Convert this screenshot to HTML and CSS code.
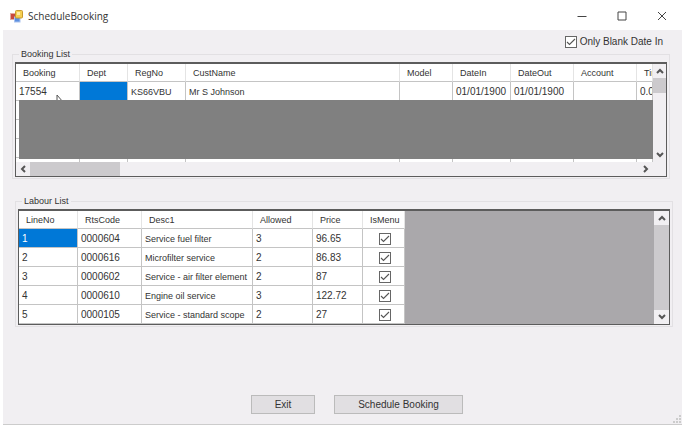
FILE: index.html
```html
<!doctype html>
<html lang="en">
    <head>
        <title>ScheduleBooking</title>
        <meta charset="utf-8">
        <link rel="stylesheet" href="styles.css">
    </head>
    <body>
        <div class="window">
            <header class="titlebar">
                <svg class="app-icon" width="13" height="13" viewBox="0 0 13 13">
                    <rect x="0.5" y="3.5" width="5" height="6" fill="#c8493c" stroke="#e3aaa0"/>
                    <rect x="4.5" y="7" width="5.5" height="5" fill="#5d8fe0" stroke="#a9c2ee"/>
                    <rect x="5.5" y="0.5" width="7" height="7.5" rx="1" fill="#f5cf52" stroke="#c99a2e"/>
                    <rect x="7" y="2" width="3" height="3" fill="#fdeba4"/>
                </svg>
                <h1>ScheduleBooking</h1>
                <button class="caption" aria-label="Minimize">
                    <svg width="10" height="10" viewBox="0 0 10 10"><path d="M0.5 5.5h9"/></svg>
                </button>
                <button class="caption" aria-label="Maximize">
                    <svg width="10" height="10" viewBox="0 0 10 10"><path d="M1 1h8v8h-8z"/></svg>
                </button>
                <button class="caption" aria-label="Close">
                    <svg width="10" height="10" viewBox="0 0 10 10"><path d="M1 1l8 8M9 1l-8 8"/></svg>
                </button>
            </header>

            <main class="form">
                <div class="filter">
                    <input type="checkbox" id="blankDate" checked>
                    <label for="blankDate">Only Blank Date In</label>
                </div>

                <fieldset class="group">
                    <legend>Booking List</legend>
                    <div class="grid booking">
                        <div class="view">
                            <table>
                                <colgroup>
                                    <col class="w-booking"><col class="w-dept"><col class="w-reg"><col>
                                    <col class="w-model"><col class="w-date"><col class="w-account"><col class="w-account"><col class="w-time">
                                </colgroup>
                                <thead>
                                    <tr><th>Booking</th><th>Dept</th><th>RegNo</th><th>CustName</th><th>Model</th><th>DateIn</th><th>DateOut</th><th>Account</th><th>Time</th></tr>
                                </thead>
                                <tbody>
                                    <tr><td class="num">17554</td><td class="selected"></td><td>KS66VBU</td><td>Mr S Johnson</td><td></td><td class="num">01/01/1900</td><td class="num">01/01/1900</td><td></td><td class="num">0.00</td></tr>
                                    <tr><td></td><td></td><td></td><td></td><td></td><td></td><td></td><td></td><td></td></tr>
                                    <tr><td></td><td></td><td></td><td></td><td></td><td></td><td></td><td></td><td></td></tr>
                                    <tr><td></td><td></td><td></td><td></td><td></td><td></td><td></td><td></td><td></td></tr>
                                    <tr><td></td><td></td><td></td><td></td><td></td><td></td><td></td><td></td><td></td></tr>
                                </tbody>
                            </table>
                            <svg class="pointer" width="8" height="12" viewBox="0 0 8 12"><path d="M1 1v9l2-2h4z" fill="#fff" stroke="#555"/></svg>
                            <div class="mask"></div>
                        </div>
                        <div class="scroll-v">
                            <button aria-label="Scroll up"><svg width="8" height="6" viewBox="0 0 8 6"><path d="M1 5l3-3 3 3"/></svg></button>
                            <span class="thumb short"></span>
                            <button aria-label="Scroll down"><svg width="8" height="6" viewBox="0 0 8 6"><path d="M1 1l3 3 3-3"/></svg></button>
                        </div>
                        <div class="scroll-h">
                            <button aria-label="Scroll left"><svg width="6" height="8" viewBox="0 0 6 8"><path d="M5 1l-3 3 3 3"/></svg></button>
                            <span class="thumb"></span>
                            <button aria-label="Scroll right"><svg width="6" height="8" viewBox="0 0 6 8"><path d="M1 1l3 3-3 3"/></svg></button>
                        </div>
                    </div>
                </fieldset>

                <fieldset class="group labour-group">
                    <legend>Labour List</legend>
                    <div class="grid labour">
                        <div class="view">
                            <table>
                                <colgroup>
                                    <col class="w-line"><col class="w-code"><col class="w-desc"><col class="w-allowed"><col class="w-price"><col class="w-menu">
                                </colgroup>
                                <thead>
                                    <tr><th>LineNo</th><th>RtsCode</th><th>Desc1</th><th>Allowed</th><th>Price</th><th class="tight">IsMenu</th></tr>
                                </thead>
                                <tbody>
                                    <tr><td class="num selected">1</td><td class="num">0000604</td><td>Service fuel filter</td><td class="num">3</td><td class="num">96.65</td><td class="check"><input type="checkbox" aria-label="IsMenu, line 1" checked></td></tr>
                                    <tr><td class="num">2</td><td class="num">0000616</td><td>Microfilter service</td><td class="num">2</td><td class="num">86.83</td><td class="check"><input type="checkbox" aria-label="IsMenu, line 2" checked></td></tr>
                                    <tr><td class="num">3</td><td class="num">0000602</td><td>Service - air filter element</td><td class="num">2</td><td class="num">87</td><td class="check"><input type="checkbox" aria-label="IsMenu, line 3" checked></td></tr>
                                    <tr><td class="num">4</td><td class="num">0000610</td><td>Engine oil service</td><td class="num">3</td><td class="num">122.72</td><td class="check"><input type="checkbox" aria-label="IsMenu, line 4" checked></td></tr>
                                    <tr><td class="num">5</td><td class="num">0000105</td><td>Service - standard scope</td><td class="num">2</td><td class="num">27</td><td class="check"><input type="checkbox" aria-label="IsMenu, line 5" checked></td></tr>
                                </tbody>
                            </table>
                        </div>
                        <div class="scroll-v">
                            <button aria-label="Scroll up"><svg width="8" height="6" viewBox="0 0 8 6"><path d="M1 5l3-3 3 3"/></svg></button>
                            <span class="thumb"></span>
                            <button aria-label="Scroll down"><svg width="8" height="6" viewBox="0 0 8 6"><path d="M1 1l3 3 3-3"/></svg></button>
                        </div>
                    </div>
                </fieldset>

                <div class="actions">
                    <button class="btn">Exit</button>
                    <button class="btn wide">Schedule Booking</button>
                </div>
            </main>
            <svg class="grip" width="8" height="8" viewBox="0 0 8 8"><path d="M6 0h2v2h-2zM3 3h2v2h-2zM6 3h2v2h-2zM0 6h2v2h-2zM3 6h2v2h-2zM6 6h2v2h-2z" fill="#ccc"/></svg>
        </div>
    </body>
</html>
```
FILE: styles.css
```css
* {
    box-sizing: border-box;
}

body {
    margin: 0;
    background: #fff;
    color: #333;
    font: 10px/12px "Liberation Sans", Arial, sans-serif;
}

button {
    padding: 0;
    border: 0;
    background: none;
    color: inherit;
    font: inherit;
}

.window {
    position: relative;
    display: flex;
    flex-direction: column;
    min-height: 100vh;
    padding: 0 0 1px 3px;
}

/* title bar */

.titlebar {
    display: flex;
    align-items: center;
    height: 30px;
    padding: 2px 0 0 7px;
}

.titlebar h1 {
    flex: 1;
    margin: 0 0 0 5px;
    font: 10px/14px "Open Sans", "Segoe UI", sans-serif;
}

.caption {
    display: flex;
    align-items: center;
    justify-content: center;
    width: 40px;
    height: 28px;
}

.caption svg {
    fill: none;
    stroke: #444;
}

.form {
    display: flex;
    flex: 1;
    flex-direction: column;
    padding: 6px 12px 10px 9px;
    border-bottom: 1px solid #ccc;
    background: #f1eff2;
}

.filter {
    display: flex;
    align-items: center;
    justify-content: flex-end;
    gap: 3px;
    padding-right: 7px;
}

input[type="checkbox"] {
    appearance: none;
    display: block;
    width: 12px;
    height: 12px;
    margin: 0;
    border: 1px solid #666;
    background: #fff url("data:image/svg+xml,%3Csvg xmlns='http://www.w3.org/2000/svg' viewBox='0 0 10 10'%3E%3Cpath d='M1 5l2.5 2.5 5.5-5.5' fill='none' stroke='%23555' stroke-width='1.1'/%3E%3C/svg%3E");
}

/* group boxes */

.group {
    min-width: 0;
    margin: 0;
    padding: 2px 2px 1px;
    border: 1px solid #e2e0e3;
}

.group legend {
    margin-left: 4px;
    padding: 0 2px;
    font-size: 9px;
}

.labour-group {
    margin: 16px -3px 0 3px;
}

/* data grids */

.grid {
    display: grid;
    border: 1px solid #5c5c5c;
    border-top-width: 2px;
    background: #f1eff2;
}

.booking {
    grid-template-columns: 1fr 13px;
}

.labour {
    grid-template-columns: 1fr 15px;
}

.view {
    position: relative;
    overflow: hidden;
    background: #fff;
}

.booking .view {
    height: 98px;
}

.labour .view {
    background: #aaa8ab;
}

table {
    border-collapse: separate;
    border-spacing: 0;
    table-layout: fixed;
    background: #fff;
    font-size: 9px;
}

.booking table {
    width: 100%;
}

.labour table {
    width: 386px;
}

th,
td {
    height: 19px;
    padding: 1px 0 0 3px;
    overflow: hidden;
    border: solid #c4c4c4;
    border-width: 0 1px 1px 0;
    font-weight: normal;
    text-align: left;
    white-space: nowrap;
}

th {
    height: 18px;
    padding-left: 7px;
    border-right-color: #e4e4e4;
}

.num {
    font-size: 10px;
}

.selected {
    background: #0078d7;
    color: #fff;
}

.check input[type="checkbox"] {
    margin: 0 auto;
}

.w-booking { width: 64px; }
.w-dept { width: 48px; }
.w-reg { width: 58px; }
.w-model { width: 53px; }
.w-date { width: 58px; }
.w-account { width: 63px; }
.w-time { width: 16px; }

.w-line { width: 59px; }
.w-code { width: 64px; }
.w-desc { width: 111px; }
.w-allowed { width: 60px; }
.w-price { width: 50px; }
.w-menu { width: 42px; }

.pointer {
    position: absolute;
    top: 30px;
    left: 40px;
}

.mask {
    position: absolute;
    inset: 36px 0 3px 3px;
    background: #808080;
}

/* scroll bars */

.scroll-v,
.scroll-h {
    display: flex;
    background: #f1eff2;
}

.scroll-v {
    flex-direction: column;
}

.scroll-h {
    height: 14px;
}

.scroll-v button,
.scroll-h button {
    display: flex;
    align-items: center;
    justify-content: center;
    width: 14px;
    height: 14px;
}

.scroll-v button {
    width: 100%;
}

.scroll-v svg,
.scroll-h svg {
    fill: none;
    stroke: #555;
    stroke-width: 2;
}

.thumb {
    background: #cccacd;
}

.scroll-h .thumb {
    width: 90px;
    margin-right: auto;
}

.scroll-v .thumb {
    flex: 1;
}

.scroll-v .short {
    flex: none;
    height: 15px;
    margin-bottom: auto;
}

/* bottom buttons */

.actions {
    display: flex;
    justify-content: center;
    gap: 19px;
    margin-top: auto;
    padding-right: 28px;
    padding-left: 60px;
}

.btn {
    width: 64px;
    height: 19px;
    border: 1px solid #bbb;
    background: #e1dfe2;
}

.btn.wide {
    width: 129px;
}

.grip {
    position: absolute;
    right: 1px;
    bottom: 3px;
}
```
